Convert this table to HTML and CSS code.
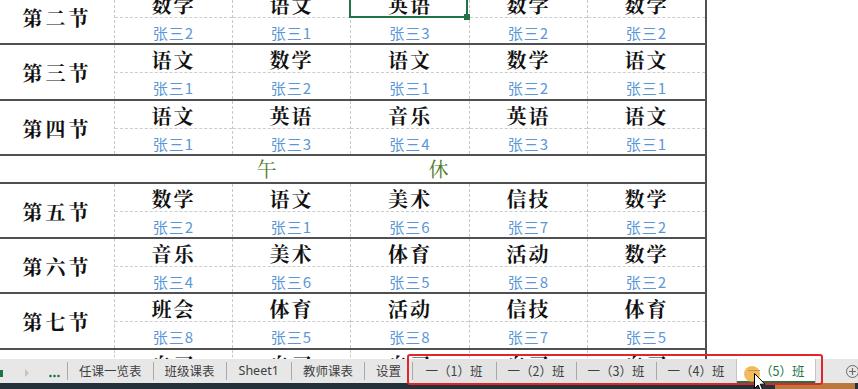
FILE: index.html
```html
<!DOCTYPE html>
<html lang="zh-CN">
<head>
<meta charset="utf-8">
<title>课表</title>
<link rel="stylesheet" href="styles.css">
</head>
<body>
<div class="app">
  <div class="sheet">
    <div class="grid">
      <div class="row">
        <div class="label">第二节</div>
        <div class="cell"><div class="subj">数学</div><div class="teach">张三2</div></div>
        <div class="cell"><div class="subj">语文</div><div class="teach">张三1</div></div>
        <div class="cell wide"><div class="subj">英语</div><div class="teach">张三3</div></div>
        <div class="cell"><div class="subj">数学</div><div class="teach">张三2</div></div>
        <div class="cell"><div class="subj">数学</div><div class="teach">张三2</div></div>
      </div>
      <div class="row tall">
        <div class="label">第三节</div>
        <div class="cell"><div class="subj">语文</div><div class="teach">张三1</div></div>
        <div class="cell"><div class="subj">数学</div><div class="teach">张三2</div></div>
        <div class="cell wide"><div class="subj">语文</div><div class="teach">张三1</div></div>
        <div class="cell"><div class="subj">数学</div><div class="teach">张三2</div></div>
        <div class="cell"><div class="subj">语文</div><div class="teach">张三1</div></div>
      </div>
      <div class="row">
        <div class="label">第四节</div>
        <div class="cell"><div class="subj">语文</div><div class="teach">张三1</div></div>
        <div class="cell"><div class="subj">英语</div><div class="teach">张三3</div></div>
        <div class="cell wide"><div class="subj">音乐</div><div class="teach">张三4</div></div>
        <div class="cell"><div class="subj">英语</div><div class="teach">张三3</div></div>
        <div class="cell"><div class="subj">语文</div><div class="teach">张三1</div></div>
      </div>
      <div class="row noon"><span>午</span><span>休</span></div>
      <div class="row">
        <div class="label">第五节</div>
        <div class="cell"><div class="subj">数学</div><div class="teach">张三2</div></div>
        <div class="cell"><div class="subj">语文</div><div class="teach">张三1</div></div>
        <div class="cell wide"><div class="subj">美术</div><div class="teach">张三6</div></div>
        <div class="cell"><div class="subj">信技</div><div class="teach">张三7</div></div>
        <div class="cell"><div class="subj">数学</div><div class="teach">张三2</div></div>
      </div>
      <div class="row">
        <div class="label">第六节</div>
        <div class="cell"><div class="subj">音乐</div><div class="teach">张三4</div></div>
        <div class="cell"><div class="subj">美术</div><div class="teach">张三6</div></div>
        <div class="cell wide"><div class="subj">体育</div><div class="teach">张三5</div></div>
        <div class="cell"><div class="subj">活动</div><div class="teach">张三8</div></div>
        <div class="cell"><div class="subj">数学</div><div class="teach">张三2</div></div>
      </div>
      <div class="row tall">
        <div class="label">第七节</div>
        <div class="cell"><div class="subj">班会</div><div class="teach">张三8</div></div>
        <div class="cell"><div class="subj">体育</div><div class="teach">张三5</div></div>
        <div class="cell wide"><div class="subj">活动</div><div class="teach">张三8</div></div>
        <div class="cell"><div class="subj">信技</div><div class="teach">张三7</div></div>
        <div class="cell"><div class="subj">体育</div><div class="teach">张三5</div></div>
      </div>
      <div class="row last">
        <div class="label"></div>
        <div class="cell"><div class="subj">自习</div></div>
        <div class="cell"><div class="subj">自习</div></div>
        <div class="cell wide"><div class="subj">自习</div></div>
        <div class="cell"><div class="subj">自习</div></div>
        <div class="cell"><div class="subj">自习</div></div>
      </div>
    </div>
    <div class="selection"><span class="handle"></span></div>
  </div>

  <div class="tabbar">
    <div class="nav">
      <svg width="67" height="24" viewBox="0 0 67 24">
        <rect x="0" y="11" width="3" height="7" fill="#217346"/>
        <polygon points="25,10 29,14 25,18" fill="#c4c4c4"/>
        <circle cx="50.5" cy="17" r="1.3" fill="#217346"/>
        <circle cx="54.5" cy="17" r="1.3" fill="#217346"/>
        <circle cx="58.5" cy="17" r="1.3" fill="#217346"/>
      </svg>
    </div>
    <div class="tab">任课一览表</div>
    <div class="tab">班级课表</div>
    <div class="tab latin">Sheet1</div>
    <div class="tab">教师课表</div>
    <div class="tab">设置</div>
    <div class="tab cls first">一（1）班</div>
    <div class="tab cls">一（2）班</div>
    <div class="tab cls">一（3）班</div>
    <div class="tab cls">一（4）班</div>
    <div class="tab cls active">一（5）班</div>
    <div class="add">
      <svg width="13" height="13" viewBox="0 0 13 13">
        <circle cx="6.5" cy="6.5" r="6" fill="none" stroke="#6a6a6a" stroke-width="1"/>
        <path d="M6.5 3v7M3 6.5h7" stroke="#6a6a6a" stroke-width="1.2"/>
      </svg>
    </div>
    <div class="mark"></div>
    <div class="click-dot"></div>
    <svg class="cursor" width="13" height="20" viewBox="0 0 13 20">
      <path d="M0.5 0.5 L0.5 15.5 L4 12 L6.8 18.3 L9 17.3 L6.3 11.2 L11 11.2 Z" fill="#fff" stroke="#000" stroke-width="1" stroke-linejoin="round"/>
    </svg>
  </div>
  <div class="strip"><div class="strip-fill"></div><div class="strip-accent"></div></div>
</div>
</body>
</html>
```

FILE: styles.css
```css
* { box-sizing: border-box; }

html, body {
  margin: 0;
  padding: 0;
  background: #fff;
}

.app {
  width: 858px;
  height: 389px;
  display: flex;
  flex-direction: column;
  overflow: hidden;
  position: relative;
}

.sheet {
  position: relative;
  height: 359px;
  flex: none;
  overflow: hidden;
  background: #fff;
}

.grid {
  width: 707px;
  margin-top: -10px;
  border-right: 2px solid #505050;
}

.row {
  display: flex;
  border-bottom: 2px solid #505050;
}

.row.last {
  height: 12px;
  overflow: hidden;
  border-bottom: 0;
}

.label {
  width: 114px;
  flex: none;
  display: flex;
  align-items: center;
  justify-content: center;
  padding-top: 2px;
  font-family: "Noto Serif CJK SC", "Noto Sans CJK SC", serif;
  font-weight: 700;
  font-size: 20px;
  line-height: 20px;
  letter-spacing: 3px;
  color: #111;
}

.cell {
  width: 118px;
  flex: none;
  border-left: 1px dashed #c8c8c8;
}

.cell.wide { width: 119px; }

.subj {
  height: 28px;
  padding-top: 5px;
  border-bottom: 1px dashed #cdcdcd;
  text-align: center;
  font-family: "Noto Serif CJK SC", "Noto Sans CJK SC", serif;
  font-weight: 700;
  font-size: 20px;
  line-height: 20px;
  letter-spacing: 2px;
  color: #111;
}

.teach {
  height: 25px;
  padding-top: 7px;
  text-align: center;
  font-family: "Noto Sans CJK SC", "Noto Sans", sans-serif;
  font-weight: 400;
  font-size: 15px;
  line-height: 15px;
  letter-spacing: 1px;
  color: #5b97d6;
}

.row.tall .teach { height: 26px; }

.row.noon {
  height: 28px;
  justify-content: center;
  align-items: center;
  gap: 152px;
  font-family: "Noto Serif CJK SC", "Noto Sans CJK SC", serif;
  font-size: 20px;
  line-height: 20px;
  color: #4e7d2b;
}

.selection {
  position: absolute;
  left: 349px;
  top: -4px;
  width: 119px;
  height: 22px;
  border: 2px solid #217346;
}

.handle {
  position: absolute;
  right: -4px;
  bottom: -4px;
  width: 6px;
  height: 6px;
  background: #217346;
}

/* sheet tabs */
.tabbar {
  position: relative;
  z-index: 2;
  height: 24px;
  flex: none;
  display: flex;
  align-items: stretch;
  background: #e7e7e7;
  font-family: "Noto Sans", "Noto Sans CJK SC", sans-serif;
  font-size: 12.5px;
  color: #404040;
}

.nav {
  width: 67px;
  flex: none;
  display: flex;
}

.tab {
  flex: none;
  display: flex;
  align-items: center;
  justify-content: center;
  padding: 0 11px 1px 12px;
  white-space: nowrap;
  background: linear-gradient(#a8a8a8, #a8a8a8) left center / 1px 18px no-repeat;
}

.tab.latin { padding: 0 12px 1px 13px; }

.tab.cls {
  width: 80px;
  padding: 0 0 1px;
  background-color: #e3e3e3;
  font-family: "Noto Sans CJK SC", sans-serif;
}

.tab.cls.first { width: 84px; }

.tab.active {
  background: #fff;
  color: #217346;
  box-shadow: inset 0 -2px 0 #217346;
  border-left: 1px solid #c4c4c4;
  border-right: 1px solid #c4c4c4;
}

.add {
  margin-left: auto;
  margin-right: -1px;
  width: 13px;
  display: flex;
  align-items: center;
}

.mark {
  position: absolute;
  left: 407px;
  top: -5px;
  width: 416px;
  height: 31px;
  border: 2px solid #e3242b;
  border-radius: 3px;
}

.click-dot {
  position: absolute;
  left: 744px;
  top: 7px;
  width: 16px;
  height: 16px;
  border-radius: 50%;
  background: rgba(240, 168, 50, 0.78);
}

.cursor {
  position: absolute;
  left: 754px;
  top: 14px;
}

.strip {
  height: 6px;
  flex: none;
  display: flex;
  background: #25313a;
}

.strip-fill { width: 775px; flex: none; }

.strip-accent {
  width: 80px;
  flex: none;
  background: #bb783d;
}
```
